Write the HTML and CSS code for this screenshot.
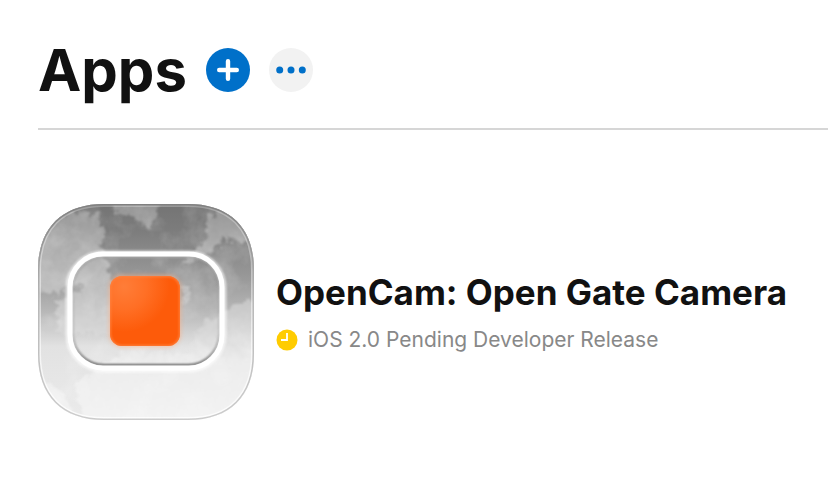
FILE: index.html
```
<!DOCTYPE html>
<html lang="en">
<head>
    <meta charset="UTF-8">
    <meta name="viewport" content="width=device-width, initial-scale=1.0">
    <title>Apps</title>
    <link rel="stylesheet" href="styles.css">
</head>
<body>
    <header class="page-header">
        <h1>Apps</h1>
        <button class="round-btn add-btn" type="button" aria-label="Add app">
            <svg width="22" height="22" viewBox="0 0 22 22"><path d="M11 2.2v17.6M2.2 11h17.6" stroke="#fff" stroke-width="4.4" stroke-linecap="round"/></svg>
        </button>
        <button class="round-btn more-btn" type="button" aria-label="More options">
            <svg width="30" height="8" viewBox="0 0 30 8" fill="#0070c9"><circle cx="3.7" cy="4" r="3.5"/><circle cx="15" cy="4" r="3.5"/><circle cx="26.3" cy="4" r="3.5"/></svg>
        </button>
    </header>

    <main class="app-list">
        <article class="app">
            <svg class="app-icon" viewBox="0 0 216 216" aria-hidden="true">
                <defs>
                    <linearGradient id="sky" x1="0" y1="0" x2="0" y2="1">
                        <stop offset="0" stop-color="#747474"/>
                        <stop offset=".12" stop-color="#7c7c7c"/>
                        <stop offset=".35" stop-color="#9a9a9a"/>
                        <stop offset=".5" stop-color="#b8b8b8"/>
                        <stop offset=".66" stop-color="#e2e2e2"/>
                        <stop offset="1" stop-color="#ebebeb"/>
                    </linearGradient>
                    <linearGradient id="cloud" gradientUnits="userSpaceOnUse" x1="0" y1="0" x2="0" y2="216">
                        <stop offset="0" stop-color="#959595"/>
                        <stop offset=".2" stop-color="#adadad"/>
                        <stop offset=".4" stop-color="#c0c0c0"/>
                        <stop offset=".6" stop-color="#d8d8d8"/>
                        <stop offset=".72" stop-color="#ececec"/>
                        <stop offset="1" stop-color="#f3f3f3"/>
                    </linearGradient>
                    <linearGradient id="edge" x1="0" y1="0" x2="0" y2="1">
                        <stop offset="0" stop-color="#808080"/>
                        <stop offset=".45" stop-color="#b8b8b8"/>
                        <stop offset="1" stop-color="#ccc"/>
                    </linearGradient>
                    <linearGradient id="shine" x1="0" y1="0" x2="0" y2="1">
                        <stop offset="0" stop-color="#fff" stop-opacity=".25"/>
                        <stop offset="1" stop-color="#fff" stop-opacity=".8"/>
                    </linearGradient>
                    <radialGradient id="orange" cx=".2" cy=".15" r=".65">
                        <stop offset="0" stop-color="#ff7d38"/>
                        <stop offset=".5" stop-color="#ff6f25"/>
                        <stop offset="1" stop-color="#fd5b0a"/>
                    </radialGradient>
                    <filter id="rough" x="-10%" y="-10%" width="120%" height="120%" color-interpolation-filters="sRGB">
                        <feTurbulence type="fractalNoise" baseFrequency=".16" numOctaves="4" seed="5"/>
                        <feDisplacementMap in="SourceGraphic" scale="14" xChannelSelector="R" yChannelSelector="G"/>
                        <feGaussianBlur stdDeviation=".8"/>
                    </filter>
                    <filter id="mist" x="0" y="0" width="100%" height="100%" color-interpolation-filters="sRGB">
                        <feTurbulence type="fractalNoise" baseFrequency=".035" numOctaves="4" seed="9"/>
                        <feColorMatrix values="0 0 0 0 1  0 0 0 0 1  0 0 0 0 1  1.6 0 0 0 -.7"/>
                    </filter>
                    <filter id="soft" x="-20%" y="-20%" width="140%" height="140%"><feGaussianBlur stdDeviation="2"/></filter>
                    <filter id="line" x="-20%" y="-20%" width="140%" height="140%"><feGaussianBlur stdDeviation=".8"/></filter>
                    <linearGradient id="inset" gradientUnits="userSpaceOnUse" x1="0" y1="53" x2="0" y2="161">
                        <stop offset="0" stop-color="#777" stop-opacity=".6"/>
                        <stop offset=".35" stop-color="#777" stop-opacity=".2"/>
                        <stop offset=".7" stop-color="#777" stop-opacity=".3"/>
                        <stop offset="1" stop-color="#555"/>
                    </linearGradient>
                    <path id="shape" d="M66 0H150C192 0 216 24 216 66V150C216 192 192 216 150 216H66C24 216 0 192 0 150V66C0 24 24 0 66 0Z"/>
                    <clipPath id="mask"><use href="#shape"/></clipPath>
                    <clipPath id="block"><rect x="72" y="72" width="70" height="70" rx="12"/></clipPath>
                </defs>
                <g clip-path="url(#mask)">
                    <rect width="216" height="216" fill="url(#sky)"/>
                    <!-- clouds -->
                    <g fill="url(#cloud)" filter="url(#rough)">
                        <path d="M-12 24 18 12 42 6 60 12 67 28 62 45 70 62 72 80 84 100 96 130H20L18 98 30 92 42 88 46 78 34 82 20 88 8 90-12 78Z"/>
                        <path d="M68-10H119L120 12 112 27 104 18 92 12 78 8Z"/>
                        <path d="M166 15 180 7 194 9 206 22 212 40 198 36 184 36 174 48 160 55 145 61 149 52 162 42 170 32Z"/>
                        <path d="M146 82 151 86 149 96 144 102Z"/>
                        <path d="M230 94 210 97 194 102 180 112 164 118 156 132 150 150 90 145 60 165 36 180 50 230H230Z"/>
                        <path d="M-12 175 12 178 28 192 44 230H-12Z"/>
                    </g>
                    <rect width="216" height="216" filter="url(#mist)" opacity=".3"/>
                    <use href="#shape" fill="none" stroke="url(#shine)" stroke-width="6"/>
                    <use href="#shape" fill="none" stroke="url(#edge)" stroke-width="3"/>
                </g>
                <!-- viewfinder frame -->
                <rect x="31" y="50" width="154" height="115" rx="34" fill="none" stroke="#fff" stroke-width="7" opacity=".65" filter="url(#line)"/>
                <rect x="35" y="53" width="146" height="108" rx="31" fill="none" stroke="url(#inset)" stroke-width="2" filter="url(#line)"/>
                <rect x="32" y="50" width="152" height="114" rx="33" fill="none" stroke="#fff" stroke-width="5"/>
                <!-- record block -->
                <rect x="71" y="71" width="72" height="72" rx="13" fill="#ffae82" opacity=".6" filter="url(#soft)"/>
                <rect x="72" y="72" width="70" height="70" rx="12" fill="url(#orange)"/>
                <g clip-path="url(#block)">
                    <rect x="72" y="72" width="70" height="70" rx="12" fill="none" stroke="#ff8240" stroke-width="2" filter="url(#line)"/>
                </g>
            </svg>
            <div class="app-info">
                <h2>OpenCam: Open Gate Camera</h2>
                <p class="status">
                    <svg width="22" height="22" viewBox="0 0 22 22" aria-hidden="true"><circle cx="11" cy="11" r="10.5" fill="#fc0"/><path d="M11 4v7H5" fill="none" stroke="#fff" stroke-width="1.8"/></svg>
                    <span>iOS 2.0 Pending Developer Release</span>
                </p>
            </div>
        </article>
    </main>
</body>
</html>
```

FILE: styles.css
```
* {
    box-sizing: border-box;
}

body {
    margin: 0;
    padding-left: 38px;
    background: #fff;
    color: #111;
    font-family: Inter, "Liberation Sans", sans-serif;
}

h1, h2, p {
    margin: 0;
}

.page-header {
    display: flex;
    align-items: center;
    gap: 19px;
    padding: 34px 0 22px;
    border-bottom: 2px solid #d6d6d6;
}

h1 {
    font-size: 58px;
    font-weight: 700;
    line-height: 72px;
}

.round-btn {
    display: flex;
    align-items: center;
    justify-content: center;
    width: 44px;
    height: 44px;
    padding: 0;
    border: 0;
    border-radius: 50%;
    cursor: pointer;
}

.add-btn {
    background: #0070c9;
}

.more-btn {
    background: #f2f2f2;
}

.app-list {
    padding: 74px 0 58px;
}

.app {
    display: flex;
    align-items: center;
    gap: 22px;
}

.app-icon {
    flex: none;
    width: 216px;
    height: 216px;
}

h2 {
    font-size: 35px;
    font-weight: 700;
    line-height: 42px;
}

.status {
    display: flex;
    align-items: center;
    gap: 10px;
    margin-top: 14px;
    color: #888;
    font-size: 21px;
    line-height: 26px;
}
```
